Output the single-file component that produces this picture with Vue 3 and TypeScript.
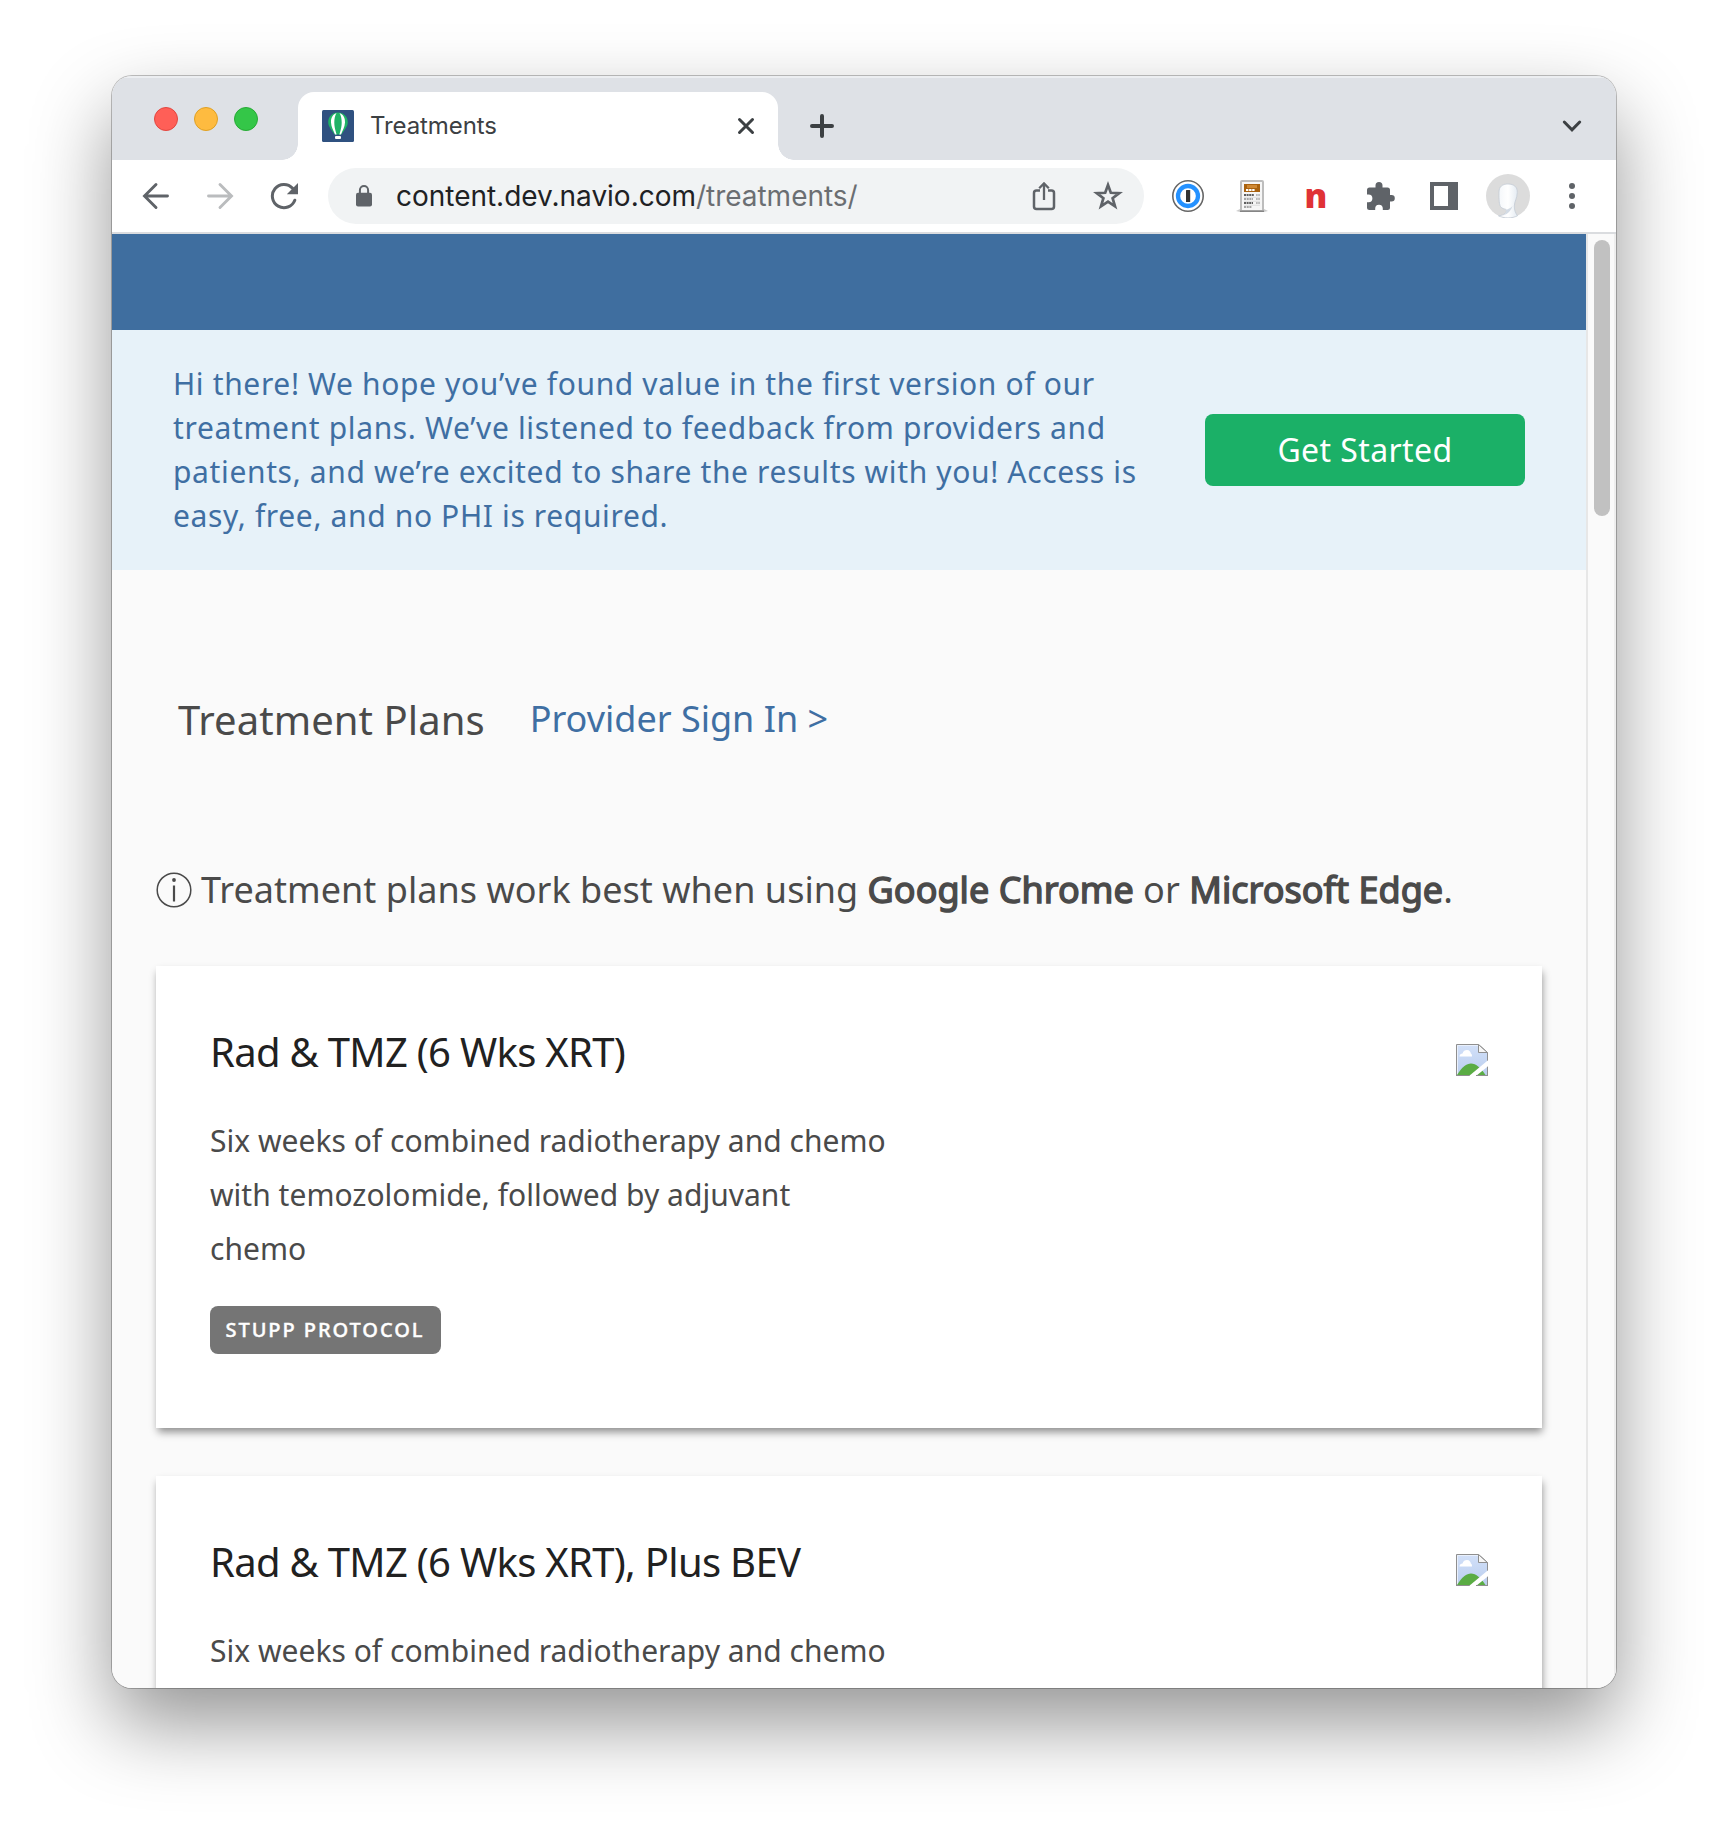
<script setup lang="ts">
interface Plan {
  title: string
  lines: string[]
  tag?: string
}

const bannerLines: string[] = [
  'Hi there! We hope you’ve found value in the first version of our',
  'treatment plans. We’ve listened to feedback from providers and',
  'patients, and we’re excited to share the results with you! Access is',
  'easy, free, and no PHI is required.',
]

const plans: Plan[] = [
  {
    title: 'Rad & TMZ (6 Wks XRT)',
    lines: [
      'Six weeks of combined radiotherapy and chemo',
      'with temozolomide, followed by adjuvant',
      'chemo',
    ],
    tag: 'STUPP PROTOCOL',
  },
  {
    title: 'Rad & TMZ (6 Wks XRT), Plus BEV',
    lines: ['Six weeks of combined radiotherapy and chemo'],
  },
]
</script>

<template>
  <div class="desktop">
    <div class="window">
      <div class="tabstrip">
        <div class="lights">
          <span class="light red"></span>
          <span class="light amber"></span>
          <span class="light green"></span>
        </div>
        <div class="tab">
          <svg class="favicon" width="32" height="32" viewBox="0 0 32 32">
            <rect width="32" height="32" rx="1.5" fill="#2f5180" />
            <path d="M16 2.5C10 2.5 6.2 7 6.2 12.3C6.2 17 10 20.500 12.600 24.500H19.400C22 20.500 25.800 17 25.800 12.300C25.800 7 22 2.500 16 2.500Z" fill="#1fb266" />
            <path d="M14.500 3C10.500 4.500 8.800 8 9 12.500C9.200 17 11.500 20.500 13 24.500H14.600C12.900 19 12.300 16 12.300 12.500C12.300 8.500 13 5.500 14.500 3ZM17.500 3C21.500 4.500 23.200 8 23 12.500C22.800 17 20.500 20.500 19 24.500H17.400C19.100 19 19.700 16 19.700 12.500C19.700 8.500 19 5.500 17.500 3Z" fill="#fff" />
            <rect x="13" y="26" width="6" height="3" rx="1" fill="#fff" />
          </svg>
          <span class="tab-title">Treatments</span>
          <svg class="tab-close" width="20" height="20" viewBox="0 0 20 20">
            <path d="M3.500 3.500L16.500 16.500M16.500 3.500L3.500 16.500" stroke="#3c4043" stroke-width="3" stroke-linecap="round" />
          </svg>
        </div>
        <svg class="new-tab" width="24" height="24" viewBox="0 0 24 24">
          <path d="M12 2V22M2 12H22" stroke="#3c4043" stroke-width="4" stroke-linecap="round" />
        </svg>
        <svg class="tab-search" width="20" height="14" viewBox="0 0 20 14">
          <path d="M2.300 3L10 10.800L17.700 3" fill="none" stroke="#3c4043" stroke-width="3" stroke-linecap="round" stroke-linejoin="miter" />
        </svg>
      </div>

      <div class="toolbar">
        <svg class="back" width="28" height="28" viewBox="0 0 28 28">
          <path d="M25.500 14H3M14 2.500L2.500 14L14 25.500" fill="none" stroke="#5f6368" stroke-width="2.900" stroke-linecap="round" stroke-linejoin="miter" />
        </svg>
        <svg class="forward" width="28" height="28" viewBox="0 0 28 28">
          <path d="M2.500 14H25M14 2.500L25.500 14L14 25.500" fill="none" stroke="#babcbe" stroke-width="2.900" stroke-linecap="round" stroke-linejoin="miter" />
        </svg>
        <svg class="reload" width="28" height="28" viewBox="0 0 28 28">
          <path d="M24.800 18.200A11.600 11.600 0 1 1 22.600 6.300" fill="none" stroke="#5f6368" stroke-width="3" stroke-linecap="round" />
          <path d="M28 1V12.200H16.800Z" fill="#5f6368" />
        </svg>
        <div class="omnibox">
          <svg class="lock" width="16" height="22" viewBox="0 0 16 22">
            <path d="M3.900 9V5.200A4.100 4.100 0 0 1 12.100 5.200V9" fill="none" stroke="#5f6368" stroke-width="2" />
            <rect y="7.700" width="16" height="13.800" rx="2" fill="#5f6368" />
          </svg>
          <span class="url">content.dev.navio.com<span class="path">/treatments/</span></span>
          <svg class="share" width="24" height="30" viewBox="0 0 24 30">
            <path d="M8 9.500H4.500A2.500 2.500 0 0 0 2 12V25.500A2.500 2.500 0 0 0 4.500 28H19.500A2.500 2.500 0 0 0 22 25.500V12A2.500 2.500 0 0 0 19.500 9.500H16" fill="none" stroke="#5f6368" stroke-width="2.500" />
            <path d="M12 19V2.500M7.200 7.200L12 2.400L16.800 7.200" fill="none" stroke="#5f6368" stroke-width="2.300" />
          </svg>
          <svg class="star" width="30" height="30" viewBox="0 0 30 30">
            <path d="M15 4L17.800 11.800L26.200 12.100L19.600 17.200L22 25.300L15 20.600L8 25.300L10.400 17.200L3.800 12.100L12.200 11.800Z" fill="none" stroke="#5f6368" stroke-width="2.700" />
          </svg>
        </div>
        <svg class="ext password" width="32" height="32" viewBox="0 0 32 32">
          <circle cx="16" cy="16" r="15.200" fill="#fff" stroke="#666" stroke-width="1.600" />
          <circle cx="16" cy="16" r="10" fill="#fff" stroke="#2491ff" stroke-width="4.300" />
          <rect x="14" y="10" width="4.200" height="12" rx=".6" fill="#333" />
        </svg>
        <svg class="ext reader" width="32" height="32" viewBox="0 0 32 32">
          <path d="M0 31L4 29H28L32 31L28 32H4Z" fill="#ccc" />
          <rect x="5" y="1" width="22" height="30" rx="1" fill="#f6f6f6" stroke="#bdbdbd" stroke-width="2" />
          <path d="M4 31.300H28" stroke="#858585" stroke-width="1.400" />
          <rect x="8" y="4" width="16" height="8" fill="#a9620f" />
          <rect x="11" y="5" width="10" height="3" fill="#cf8833" />
          <path d="M10 10H19" stroke="#fff" stroke-width="2" stroke-dasharray="2.400 .7" />
          <path d="M8 15H18M8 23H17" stroke="#5f5f5f" stroke-width="2" stroke-dasharray="2 .6" />
          <path d="M8 19H17M8 27H16" stroke="#a5a5a5" stroke-width="2" stroke-dasharray="2 .7" />
          <path d="M20 15H24M20 19H24M20 23H24" stroke="#b9b9b9" stroke-width="2" stroke-dasharray="1.700 .5" />
          <path d="M8 17.200H24M8 21.200H24M8 25.200H24" stroke="#ddd" />
        </svg>
        <span class="ext letter">n</span>
        <svg class="ext puzzle" width="30" height="30" viewBox="0 0 30 30">
          <path d="M8.500 6.500H9.500V4.500A3.500 3.500 0 0 1 16.500 4.500V6.500H21.500A2.500 2.500 0 0 1 24 9V14H25.500A3.300 3.300 0 0 1 25.500 20.600H24V26.500A2.500 2.500 0 0 1 21.500 29H16.800V27.500A3.800 3.800 0 0 0 9.200 27.500V29H3.500A2.500 2.500 0 0 1 1 26.500V21.200H2.500A3.900 3.900 0 0 0 2.500 13.400H1V9A2.500 2.500 0 0 1 3.500 6.500Z" fill="#5f6368" />
        </svg>
        <svg class="ext panel" width="28" height="28" viewBox="0 0 28 28">
          <path fill-rule="evenodd" d="M0 0H28V28H0ZM4 4V24H18V4Z" fill="#5f6368" />
        </svg>
        <svg class="avatar" width="44" height="44" viewBox="0 0 44 44">
          <defs>
            <linearGradient id="face" x1="0" y1="0" x2="1" y2="0">
              <stop offset="0" stop-color="#f4f7fa" />
              <stop offset=".5" stop-color="#fff" />
              <stop offset="1" stop-color="#e4ebf2" />
            </linearGradient>
          </defs>
          <circle cx="22" cy="22" r="22" fill="#dcdcdc" />
          <path d="M13 18C13 12.500 16.500 10 22 10C28 10 31.500 13 31.300 18.500C31 25 28.500 27 28.300 32C28.200 36 29.500 39 31.500 41.800C26 44.600 18 44.600 12.500 41.800C16 41.500 20.500 40 20.500 36.500C20.500 34.500 16.500 35.500 14.500 32.500C12.800 30 13 22 13 18Z" fill="url(#face)" stroke="#c4ccd6" stroke-width=".8" />
          <path d="M18 35.800C22 36 24.500 34 26.500 32C25.500 36 22 40 17 41.500C20 39.500 20.700 37.500 20.300 36.500Z" fill="#d3dbe5" />
        </svg>
        <svg class="menu" width="6" height="26" viewBox="0 0 6 26">
          <circle cx="3" cy="3" r="3" fill="#5f6368" />
          <circle cx="3" cy="13" r="3" fill="#5f6368" />
          <circle cx="3" cy="23" r="3" fill="#5f6368" />
        </svg>
      </div>

      <div class="viewport">
        <main class="page">
          <header class="brandbar"></header>
          <section class="banner">
            <p class="banner-text">
              <span v-for="line in bannerLines" :key="line" class="line">{{ line }}</span>
            </p>
            <button class="cta">Get Started</button>
          </section>

          <div class="heading">
            <h1>Treatment Plans</h1>
            <a class="signin">Provider Sign In &gt;</a>
          </div>

          <p class="notice">
            <svg class="info" width="36" height="36" viewBox="0 0 36 36">
              <circle cx="18" cy="18" r="16.800" fill="none" stroke="#4a4a4a" stroke-width="1.500" />
              <path d="M18 13.500V29.500" stroke="#4a4a4a" stroke-width="2.200" />
              <circle cx="18" cy="8" r="1.900" fill="#4a4a4a" />
            </svg>
            <span>Treatment plans work best when using <b>Google Chrome</b> or <b>Microsoft Edge</b>.</span>
          </p>

          <div class="cards">
            <article v-for="plan in plans" :key="plan.title" class="card">
              <div class="card-body">
                <h2>{{ plan.title }}</h2>
                <p class="desc">
                  <span v-for="line in plan.lines" :key="line" class="line">{{ line }}</span>
                </p>
                <span v-if="plan.tag" class="tag">{{ plan.tag }}</span>
              </div>
              <svg class="broken" width="32" height="32" viewBox="0 0 32 32">
                <defs>
                  <linearGradient id="sky" x1="0" y1="0" x2="0" y2="1">
                    <stop offset="0" stop-color="#d3e1f9" />
                    <stop offset="1" stop-color="#b9cdee" />
                  </linearGradient>
                </defs>
                <path d="M.5 .5H22.500L31.500 8.500V31.500H.5Z" fill="url(#sky)" stroke="#8f8f8f" />
                <path d="M1.500 31V1.500H22" fill="none" stroke="#e9f0fc" />
                <path d="M1 31C6 23 10.500 19.500 15 19.500C20 19.500 25 24 29.500 31Z" fill="#5aac44" />
                <path d="M3.500 12.500C3.500 10.500 5 9.800 6.500 9.500C7 7 9 6 11 6C13.500 6 14.700 8 14.800 9.500C16 10 16 11.500 16 12.500Z" fill="#fff" />
                <path d="M22.500 .5V8.500H31.500Z" fill="#f7f7f7" stroke="#8f8f8f" />
                <path d="M23 0H32V8.300L23 0Z" fill="#fff" />
                <path d="M22.500 .5L31.500 8.500" stroke="#999" />
                <path d="M33 15.500L13 32H20L33 21.500Z" fill="#fff" />
                <path d="M0 31.500H13.500M20 31.500H32" stroke="#8f8f8f" />
              </svg>
            </article>
          </div>
        </main>
        <aside class="scrollbar">
          <div class="thumb"></div>
        </aside>
      </div>
    </div>
  </div>
</template>

<style>
body {
  margin: 0;
  background: #fff;
}
</style>

<style scoped>
.desktop {
  box-sizing: border-box;
  width: 1728px;
  height: 1836px;
  padding: 76px 112px;
  overflow: hidden;
  background: #fff;
  font-family: "Noto Sans", sans-serif;
}
svg {
  display: block;
  flex: none;
}
h1, h2, p {
  margin: 0;
  font-weight: 400;
}
.window {
  display: flex;
  flex-direction: column;
  width: 1504px;
  height: 1612px;
  border-radius: 20px;
  overflow: hidden;
  background: #fafafa;
  box-shadow: 0 0 0 1px rgba(0, 0, 0, .24), 0 36px 80px rgba(0, 0, 0, .42);
}

/* Tab strip */
.tabstrip {
  display: flex;
  flex: none;
  align-items: flex-end;
  height: 84px;
  background: #dee1e6;
  box-shadow: inset 0 2px 0 #eceef1;
}
.lights {
  display: flex;
  align-items: center;
  gap: 16px;
  width: 144px;
  height: 82px;
  padding-left: 42px;
}
.light {
  box-sizing: border-box;
  width: 24px;
  height: 24px;
  border-radius: 50%;
}
.red { background: #ff5f57; border: 1px solid #e2463f; }
.amber { background: #febb40; border: 1px solid #dfa023; }
.green { background: #34c648; border: 1px solid #27aa35; }
.tab {
  position: relative;
  display: flex;
  align-items: center;
  box-sizing: border-box;
  width: 480px;
  height: 68px;
  padding: 0 22px 0 24px;
  border-radius: 16px 16px 0 0;
  background: #fff;
}
.tab::before,
.tab::after {
  content: "";
  position: absolute;
  bottom: 0;
  width: 16px;
  height: 16px;
}
.tab::before {
  left: -16px;
  background: radial-gradient(circle at 0 0, transparent 15.500px, #fff 16px);
}
.tab::after {
  right: -16px;
  background: radial-gradient(circle at 100% 0, transparent 15.500px, #fff 16px);
}
.tab-title {
  flex: 1;
  margin-left: 16px;
  font: 400 24px/32px Inter, sans-serif;
  letter-spacing: -.1px;
  color: #3c4043;
}
.new-tab { margin: 0 0 22px 32px; }
.tab-search { margin: 0 34px 27px auto; }

/* Toolbar */
.toolbar {
  display: flex;
  flex: none;
  align-items: center;
  box-sizing: border-box;
  height: 74px;
  padding: 0 41px 0 30px;
  border-bottom: 2px solid #dadcdf;
  background: #fff;
}
.forward { margin-left: 36px; }
.reload { margin-left: 36px; }
.omnibox {
  display: flex;
  align-items: center;
  box-sizing: border-box;
  width: 816px;
  height: 56px;
  margin-left: 30px;
  padding: 0 21px 0 28px;
  border-radius: 28px;
  background: #f1f3f4;
}
.url {
  flex: 1;
  margin-left: 24px;
  font: 400 28px/40px Inter, sans-serif;
  letter-spacing: -.02px;
  color: #202124;
}
.path { color: #6b6e72; }
.star { margin-left: 37px; }
.password { margin-left: 28px; }
.reader { margin-left: 32px; }
.letter {
  width: 24px;
  margin: -3px 0 0 36px;
  font: 800 34px/40px "Open Sans", sans-serif;
  text-align: center;
  color: #e03236;
}
.puzzle { margin-left: 38px; }
.panel { margin-left: 34px; }
.avatar { margin-left: 28px; }
.menu { margin-left: auto; }

/* Page */
.viewport {
  display: flex;
  flex: 1;
  min-height: 0;
}
.page {
  width: 1474px;
  overflow: hidden;
  background: #fafafa;
}
.scrollbar {
  box-sizing: border-box;
  width: 30px;
  padding: 6px 4px 0 6px;
  border-left: 2px solid #e7e7e7;
  border-right: 2px solid #eee;
  background: #fafafa;
}
.thumb {
  width: 16px;
  height: 276px;
  border-radius: 8px;
  background: #c1c1c1;
}
.brandbar {
  height: 96px;
  background: #3f6e9f;
}
.banner {
  display: flex;
  align-items: center;
  justify-content: space-between;
  box-sizing: border-box;
  height: 240px;
  padding: 0 61px;
  background: #e7f2f9;
}
.line {
  display: block;
  white-space: nowrap;
}
.banner-text {
  font-size: 30px;
  line-height: 44px;
  letter-spacing: .64px;
  color: #3f6fa3;
}
.cta {
  width: 320px;
  height: 72px;
  padding: 0;
  border: 0;
  border-radius: 8px;
  background: #1bb067;
  color: #fff;
  font: 400 32px/72px "Noto Sans", sans-serif;
  letter-spacing: .4px;
}
.heading {
  display: flex;
  align-items: center;
  gap: 45px;
  height: 56px;
  margin: 122px 0 0 66px;
}
.heading h1 {
  font-size: 40px;
  line-height: 56px;
  letter-spacing: .06px;
  color: #4a4a4a;
}
.signin {
  margin-top: -3px;
  font-size: 36px;
  line-height: 50px;
  color: #3f6fa3;
}
.notice {
  display: flex;
  align-items: center;
  height: 50px;
  margin: 117px 0 0 44px;
  font-size: 36px;
  line-height: 50px;
  letter-spacing: .03px;
  white-space: nowrap;
  color: #4a4a4a;
}
.info { margin-right: 9px; }
.notice b {
  font-weight: 400;
  -webkit-text-stroke: 1.400px #4a4a4a;
}
.cards {
  display: flex;
  flex-direction: column;
  gap: 48px;
  margin: 51px 44px 0;
}
.card {
  display: flex;
  flex: none;
  justify-content: space-between;
  box-sizing: border-box;
  height: 462px;
  padding: 54px 54px 0;
  background: #fff;
  box-shadow: 1px 5px 8px -1px rgba(0, 0, 0, .44);
}
.card h2 {
  font-size: 40px;
  line-height: 63px;
  letter-spacing: -.7px;
  color: #212121;
}
.desc {
  margin-top: 31px;
  font-size: 30px;
  line-height: 54px;
  letter-spacing: .02px;
  color: #4a4a4a;
}
.tag {
  display: inline-block;
  box-sizing: border-box;
  width: 231px;
  height: 48px;
  margin-top: 30px;
  padding-left: 15.500px;
  border-radius: 8px;
  background: #757575;
  font-size: 20px;
  font-weight: 500;
  line-height: 48px;
  letter-spacing: 1.950px;
  white-space: nowrap;
  color: #fff;
  -webkit-text-stroke: .4px #fff;
}
.broken { margin-top: 24px; }
</style>
